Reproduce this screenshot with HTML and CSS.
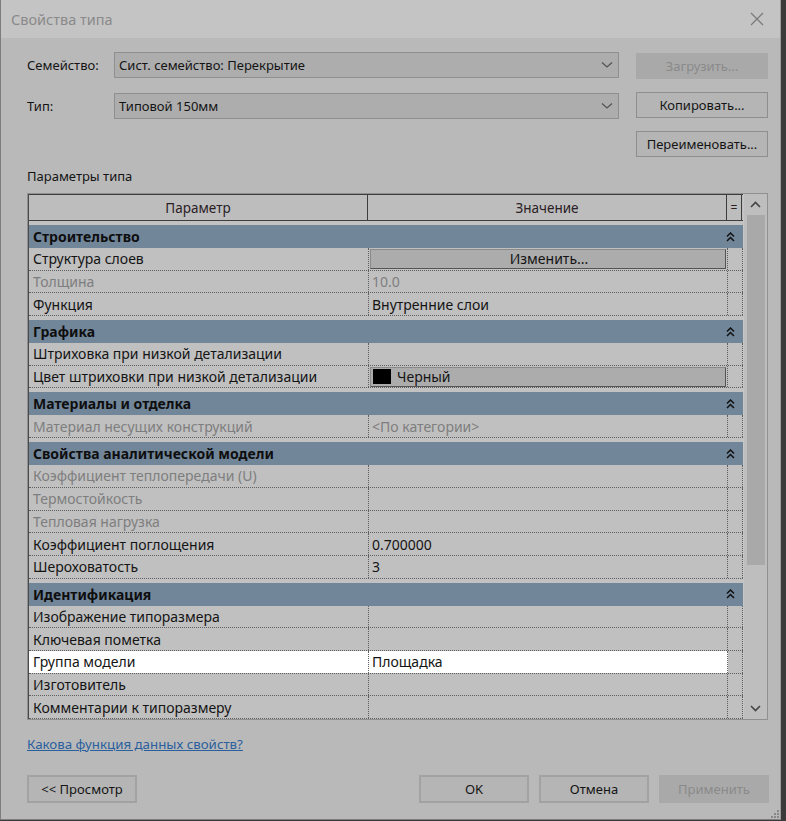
FILE: index.html
```html
<!DOCTYPE html>
<html lang="ru">
<head>
<meta charset="utf-8">
<title>Свойства типа</title>
<link rel="stylesheet" href="styles.css">
</head>
<body>
<div class="window">
  <div class="titlebar">
    <span class="title">Свойства типа</span>
    <svg class="close" width="14" height="14" viewBox="0 0 14 14"><path d="M1 1 L13 13 M13 1 L1 13" stroke="#7a7a7a" stroke-width="1.2" fill="none"/></svg>
  </div>
  <div class="content">
    <div class="top">
      <div class="fields">
        <div class="field">
          <span class="label">Семейство:</span>
          <div class="combo"><span>Сист. семейство: Перекрытие</span><svg width="12" height="8" viewBox="0 0 12 8"><path d="M1 1.5 L6 6 L11 1.5" stroke="#555" stroke-width="1.3" fill="none"/></svg></div>
        </div>
        <div class="field">
          <span class="label">Тип:</span>
          <div class="combo"><span>Типовой 150мм</span><svg width="12" height="8" viewBox="0 0 12 8"><path d="M1 1.5 L6 6 L11 1.5" stroke="#555" stroke-width="1.3" fill="none"/></svg></div>
        </div>
      </div>
      <div class="side-buttons">
        <div class="btn disabled">Загрузить...</div>
        <div class="btn">Копировать...</div>
        <div class="btn">Переименовать...</div>
      </div>
    </div>

    <div class="section-label">Параметры типа</div>

    <div class="frame">
      <div class="table">
        <div class="head">
          <div class="hc c1">Параметр</div>
          <div class="hc c2">Значение</div>
          <div class="hc c3">=</div>
        </div>

        <div class="group"><span>Строительство</span><svg class="chev" width="9" height="10" viewBox="0 0 9 10"><path d="M1 4.5 L4.5 1 L8 4.5 M1 9 L4.5 5.5 L8 9" stroke="#111" stroke-width="1.5" fill="none"/></svg></div>
        <div class="row"><div class="c1">Структура слоев</div><div class="c2"><div class="cellbtn center">Изменить...</div></div><div class="c3"></div></div>
        <div class="row"><div class="c1 dim">Толщина</div><div class="c2 dim">10.0</div><div class="c3"></div></div>
        <div class="row"><div class="c1">Функция</div><div class="c2">Внутренние слои</div><div class="c3"></div></div>

        <div class="group"><span>Графика</span><svg class="chev" width="9" height="10" viewBox="0 0 9 10"><path d="M1 4.5 L4.5 1 L8 4.5 M1 9 L4.5 5.5 L8 9" stroke="#111" stroke-width="1.5" fill="none"/></svg></div>
        <div class="row"><div class="c1">Штриховка при низкой детализации</div><div class="c2"></div><div class="c3"></div></div>
        <div class="row"><div class="c1">Цвет штриховки при низкой детализации</div><div class="c2"><div class="cellbtn"><span class="swatch"></span>Черный</div></div><div class="c3"></div></div>

        <div class="group"><span>Материалы и отделка</span><svg class="chev" width="9" height="10" viewBox="0 0 9 10"><path d="M1 4.5 L4.5 1 L8 4.5 M1 9 L4.5 5.5 L8 9" stroke="#111" stroke-width="1.5" fill="none"/></svg></div>
        <div class="row"><div class="c1 dim">Материал несущих конструкций</div><div class="c2 dim">&lt;По категории&gt;</div><div class="c3"></div></div>

        <div class="group"><span>Свойства аналитической модели</span><svg class="chev" width="9" height="10" viewBox="0 0 9 10"><path d="M1 4.5 L4.5 1 L8 4.5 M1 9 L4.5 5.5 L8 9" stroke="#111" stroke-width="1.5" fill="none"/></svg></div>
        <div class="row"><div class="c1 dim">Коэффициент теплопередачи (U)</div><div class="c2"></div><div class="c3"></div></div>
        <div class="row"><div class="c1 dim">Термостойкость</div><div class="c2"></div><div class="c3"></div></div>
        <div class="row"><div class="c1 dim">Тепловая нагрузка</div><div class="c2"></div><div class="c3"></div></div>
        <div class="row"><div class="c1">Коэффициент поглощения</div><div class="c2">0.700000</div><div class="c3"></div></div>
        <div class="row"><div class="c1">Шероховатость</div><div class="c2">3</div><div class="c3"></div></div>

        <div class="group"><span>Идентификация</span><svg class="chev" width="9" height="10" viewBox="0 0 9 10"><path d="M1 4.5 L4.5 1 L8 4.5 M1 9 L4.5 5.5 L8 9" stroke="#111" stroke-width="1.5" fill="none"/></svg></div>
        <div class="row"><div class="c1">Изображение типоразмера</div><div class="c2"></div><div class="c3"></div></div>
        <div class="row"><div class="c1">Ключевая пометка</div><div class="c2"></div><div class="c3"></div></div>
        <div class="row selected"><div class="c1">Группа модели</div><div class="c2">Площадка</div><div class="c3"></div></div>
        <div class="row"><div class="c1">Изготовитель</div><div class="c2"></div><div class="c3"></div></div>
        <div class="row"><div class="c1">Комментарии к типоразмеру</div><div class="c2"></div><div class="c3"></div></div>
      </div>
      <div class="scrollbar">
        <div class="arrow"><svg width="11" height="7" viewBox="0 0 11 7"><path d="M1 6 L5.5 1.5 L10 6" stroke="#444" stroke-width="1.6" fill="none"/></svg></div>
        <div class="track"><div class="thumb"></div></div>
        <div class="arrow"><svg width="11" height="7" viewBox="0 0 11 7"><path d="M1 1 L5.5 5.5 L10 1" stroke="#444" stroke-width="1.6" fill="none"/></svg></div>
      </div>
    </div>

    <a class="help" href="#">Какова функция данных свойств?</a>

    <div class="footer">
      <div class="btn wide">&lt;&lt; Просмотр</div>
      <div class="footer-right">
        <div class="btn wide">OK</div>
        <div class="btn wide">Отмена</div>
        <div class="btn wide disabled">Применить</div>
      </div>
    </div>
  </div>
  <svg class="grip" width="8" height="8" viewBox="0 0 8 8"><g fill="#888"><rect x="6" y="0" width="2" height="2"/><rect x="3" y="3" width="2" height="2"/><rect x="6" y="3" width="2" height="2"/><rect x="0" y="6" width="2" height="2"/><rect x="3" y="6" width="2" height="2"/><rect x="6" y="6" width="2" height="2"/></g></svg>
</div>
</body>
</html>
```

FILE: styles.css
```css
* { box-sizing: border-box; }
html, body { margin: 0; padding: 0; }
body {
  width: 786px;
  height: 821px;
  background: #3a3a3a;
  font-family: "Noto Sans", "Open Sans", sans-serif;
  font-size: 13px;
  color: #141414;
  overflow: hidden;
}
.window {
  position: relative;
  width: 781px;
  height: 820px;
  background: #b9b9b9;
  border-left: 1px solid #7d7d7d;
  border-bottom: 1px solid #7d7d7d;
  border-right: 1px solid #9a9a9a;
  display: flex;
  flex-direction: column;
}
.titlebar {
  height: 38px;
  background: #c4c4c4;
  display: flex;
  align-items: center;
  justify-content: space-between;
  padding: 0 16px 0 10px;
  flex: none;
}
.title {
  font-size: 14.5px;
  color: #8a8a8a;
}
.close { display: block; }

.content {
  padding: 14px 0 0 26px;
  display: flex;
  flex-direction: column;
}
.top {
  display: flex;
  gap: 17px;
}
.fields {
  display: flex;
  flex-direction: column;
  gap: 15px;
}
.field {
  display: flex;
  align-items: center;
}
.label {
  width: 87px;
}
.combo {
  width: 505px;
  height: 26px;
  background: #adadad;
  border: 1px solid #8f8f8f;
  display: flex;
  align-items: center;
  justify-content: space-between;
  padding: 0 5px 0 4px;
}
.side-buttons {
  display: flex;
  flex-direction: column;
  gap: 13px;
  padding-top: 1px;
}
.btn {
  width: 132px;
  height: 26px;
  border: 1px solid #8e8e8e;
  background: #b5b5b5;
  display: flex;
  align-items: center;
  justify-content: center;
  color: #141414;
}
.btn.disabled {
  background: #a9a9a9;
  border-color: #a9a9a9;
  color: #8a8a8a;
}

.section-label {
  margin-top: 10px;
  height: 26px;
  line-height: 18px;
}

.frame {
  width: 741px;
  height: 527px;
  border: 1px solid #909090;
  display: flex;
  background: #c2c2c2;
}
.table {
  width: 715px;
  border-left: 1px solid #4a4a4a;
  display: flex;
  flex-direction: column;
  font-size: 14px;
}
.head {
  display: flex;
  height: 27px;
  border-top: 1px solid #3d3d3d;
  border-bottom: 1px solid #3d3d3d;
  background: #bdbdbd;
  flex: none;
  font-size: 13.5px;
}
.hc {
  display: flex;
  align-items: center;
  justify-content: center;
  color: #2a2026;
  border-right: 1px solid #3d3d3d;
}
.c1 { width: 340px; flex: none; }
.c2 { width: 359px; flex: none; }
.c3 { width: 15px; flex: none; }
.hc.c1 { width: 339px; }
.hc.c3 { width: 15px; font-size: 12px; }

.group {
  margin-top: 4px;
  height: 23px;
  background: #72869a;
  display: flex;
  align-items: center;
  justify-content: space-between;
  padding: 0 8px 0 4px;
  font-weight: bold;
  color: #0e0e0e;
  flex: none;
}
.chev { display: block; }

.row {
  display: flex;
  height: 22.7px;
  border-bottom: 1px dotted #5e5e5e;
  background: #c0c0c0;
  flex: none;
}
.row > div {
  display: flex;
  align-items: center;
  border-right: 1px dotted #5e5e5e;
  white-space: nowrap;
  overflow: hidden;
}
.row .c1 { padding-left: 4px; }
.row .c2 { padding-left: 3px; }
.row .dim { color: #7e7e7e; }
.row.selected .c1, .row.selected .c2 { background: #ffffff; }

.cellbtn {
  width: 356px;
  height: 20px;
  margin-left: -2px;
  background: #acacac;
  border: 1px solid #8a8a8a;
  border-right-color: #555;
  border-bottom-color: #555;
  display: flex;
  align-items: center;
  padding-left: 2px;
}
.cellbtn.center { justify-content: center; }
.swatch {
  width: 18px;
  height: 15px;
  background: #000;
  margin-right: 6px;
  display: inline-block;
}

.scrollbar {
  width: 24px;
  display: flex;
  flex-direction: column;
  background: #bebebe;
  border-left: 1px solid #c6c6c6;
}
.arrow {
  height: 21px;
  display: flex;
  align-items: center;
  justify-content: center;
  flex: none;
}
.track {
  flex: 1;
  padding: 0 2px 0 3px;
}
.thumb {
  height: 350px;
  background: #a9a9a9;
}

.help {
  margin-top: 15px;
  align-self: flex-start;
  color: #2a5f9e;
  text-decoration: underline;
  line-height: 18px;
  font-size: 13.3px;
}
.footer {
  margin-top: 22px;
  width: 742px;
  display: flex;
  justify-content: space-between;
}
.footer-right {
  display: flex;
  gap: 10px;
}
.btn.wide {
  width: 110px;
  height: 28px;
  border-width: 2px;
  border-color: #a2a2a2;
}
.btn.wide.disabled { border-color: #a9a9a9; }
.grip {
  position: absolute;
  right: 1px;
  bottom: 1px;
}
```
